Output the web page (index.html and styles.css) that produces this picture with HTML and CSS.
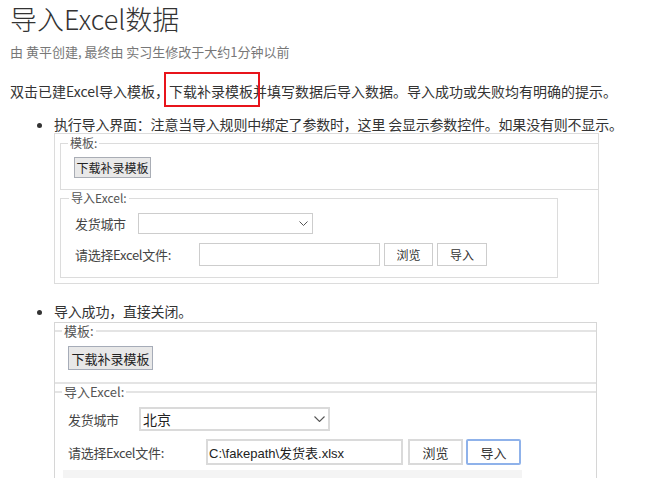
FILE: index.html
```html
<!DOCTYPE html>
<html lang="zh-CN">
<head>
<meta charset="utf-8">
<title>导入Excel数据</title>
<link rel="stylesheet" href="styles.css">
</head>
<body>
<h1 class="title">导入Excel数据</h1>
<div class="meta">由 黄平创建, 最终由 实习生修改于大约1分钟以前</div>
<p class="intro">双击已建Excel导入模板，<span class="mark">下载补录模板</span>并填写数据后导入数据。导入成功或失败均有明确的提示。</p>
<ul class="steps">
  <li class="step">
    <div class="step-text">执行导入界面：注意当导入规则中绑定了参数时，这里 会显示参数控件。如果没有则不显示。</div>
    <div class="shot shot-a">
      <fieldset class="group group-tpl">
        <legend>模板:</legend>
        <button class="btn-tpl" type="button">下载补录模板</button>
      </fieldset>
      <fieldset class="group group-imp">
        <legend>导入Excel:</legend>
        <div class="row row-1">
          <span class="lbl lbl-city">发货城市</span>
          <div class="sel"><span class="sel-val"></span><svg class="chev" width="9" height="5" viewBox="0 0 9 5"><path d="M0.5 0.5 L4.5 4.5 L8.5 0.5" fill="none" stroke="#555" stroke-width="1"/></svg></div>
        </div>
        <div class="row row-2">
          <span class="lbl lbl-file">请选择Excel文件:</span>
          <div class="file"></div>
          <button class="btn btn-browse" type="button">浏览</button>
          <button class="btn btn-import" type="button">导入</button>
        </div>
      </fieldset>
    </div>
  </li>
  <li class="step">
    <div class="step-text">导入成功，直接关闭。</div>
    <div class="shot shot-b">
      <fieldset class="group group-tpl">
        <legend>模板:</legend>
        <button class="btn-tpl" type="button">下载补录模板</button>
      </fieldset>
      <fieldset class="group group-imp">
        <legend>导入Excel:</legend>
        <div class="row row-1">
          <span class="lbl lbl-city">发货城市</span>
          <div class="sel"><span class="sel-val">北京</span><svg class="chev" width="11" height="6" viewBox="0 0 11 6"><path d="M0.5 0.5 L5.5 5.5 L10.5 0.5" fill="none" stroke="#555" stroke-width="1.1"/></svg></div>
        </div>
        <div class="row row-2">
          <span class="lbl lbl-file">请选择Excel文件:</span>
          <div class="file"><span class="file-val">C:\fakepath\发货表.xlsx</span></div>
          <button class="btn btn-browse" type="button">浏览</button>
          <button class="btn btn-import" type="button">导入</button>
        </div>
        <div class="status"></div>
      </fieldset>
    </div>
  </li>
</ul>
</body>
</html>
```
FILE: styles.css
```css
html, body {
  background: #fff;
}

body {
  margin: 0;
  padding: 0 10px;
  font-family: "Noto Sans CJK SC", "Microsoft YaHei", sans-serif;
  color: #333;
}

.title {
  margin: 2px 0 0;
  font-size: 27px;
  font-weight: 300;
  line-height: 34px;
  color: #333;
}

.meta {
  margin-top: 7px;
  font-size: 13px;
  line-height: 18px;
  color: #777;
}

.intro {
  margin: 20px 0 0;
  font-size: 14px;
  line-height: 20px;
  color: #333;
}

.mark {
  position: relative;
}

.mark::after {
  content: "";
  position: absolute;
  left: -5px;
  right: -7px;
  top: -9px;
  bottom: -6px;
  border: 2px solid #e8141b;
}

.steps {
  margin: 14px 0 0;
  padding-left: 44px;
  font-size: 14px;
  line-height: 18px;
  list-style: disc;
}

.step + .step {
  margin-top: 18px;
}

.step-text {
  line-height: 18px;
  letter-spacing: -0.2px;
}

/* ---------- screenshots ---------- */

.shot {
  box-sizing: border-box;
  line-height: normal;
}

.group {
  margin: 0;
  min-width: 0;
  box-sizing: border-box;
}

.group legend {
  padding: 0 2px;
  margin-left: -6px;
}

.row {
  display: flex;
  align-items: center;
}

.lbl {
  flex: none;
  color: #444;
}

.sel {
  display: flex;
  align-items: center;
  justify-content: space-between;
  box-sizing: border-box;
  background: #fff;
}

.file {
  display: flex;
  align-items: center;
  box-sizing: border-box;
  background: #fff;
}

.btn,
.btn-tpl {
  margin: 0;
  padding: 0;
  font-family: "Noto Sans CJK SC", "Microsoft YaHei", sans-serif;
  color: #333;
  box-sizing: border-box;
}

.btn {
  background: #fff;
}

.btn-tpl {
  color: #222;
}

/* screenshot A (small) */

.shot-a {
  width: 545px;
  border: 1px solid #dcdcdc;
  padding: 2px 0 5px 5px;
}

.shot-a .group {
  border: 1px solid #dcdcdc;
}

.shot-a .group legend {
  font-size: 12px;
  line-height: 14px;
  color: #555;
}

.shot-a .group-tpl {
  border-right: none;
  padding: 7px 0 11px 13px;
}

.shot-a .group-imp {
  width: 498px;
  margin-top: 1px;
  padding: 8px 0 11px 14px;
}

.shot-a .lbl {
  font-size: 13px;
  letter-spacing: -0.3px;
}

.shot-a .row-1 {
  height: 21px;
}

.shot-a .row-2 {
  height: 23px;
  margin-top: 9px;
}

.shot-a .lbl-city {
  width: 63px;
}

.shot-a .lbl-file {
  width: 124px;
}

.shot-a .sel {
  width: 175px;
  height: 21px;
  border: 1px solid #cdcdcd;
  padding: 0 4px 0 3px;
}

.shot-a .file {
  width: 181px;
  height: 23px;
  border: 1px solid #cdcdcd;
}

.shot-a .btn {
  height: 23px;
  border: 1px solid #cdcdcd;
  font-size: 12px;
}

.shot-a .btn-browse {
  width: 49px;
  margin-left: 4px;
}

.shot-a .btn-import {
  width: 50px;
  margin-left: 4px;
}

.shot-a .btn-tpl {
  width: 77px;
  height: 21px;
  font-size: 12px;
  background: #e9e9e9;
  border: 1px solid #a9adb5;
}

/* screenshot B (larger) */

.shot-b {
  width: 543px;
  margin-top: 2px;
  border: 1px solid #d6d6d6;
  border-bottom: none;
  padding: 0;
}

.shot-b .group {
  border: 2px solid #e4e4e4;
  border-left: none;
  border-right: none;
}

.shot-b .group legend {
  font-size: 13px;
  line-height: 15px;
  color: #555;
}

.shot-b .group-tpl {
  padding: 8px 0 12px 13px;
}

.shot-b .group-imp {
  border-bottom: none;
  padding: 8px 0 0 13px;
}

.shot-b .lbl {
  font-size: 13px;
  letter-spacing: -0.3px;
}

.shot-b .row-1 {
  height: 24px;
}

.shot-b .row-2 {
  height: 26px;
  margin-top: 8px;
}

.shot-b .lbl-city {
  width: 71px;
}

.shot-b .lbl-file {
  width: 138px;
}

.shot-b .sel {
  width: 191px;
  height: 24px;
  border: 2px solid #dadada;
  padding: 0 3px 0 2px;
}

.shot-b .sel-val {
  font-size: 14px;
  color: #222;
}

.shot-b .file {
  width: 197px;
  height: 26px;
  border: 2px solid #dadada;
  padding-left: 1px;
}

.shot-b .file-val {
  font-family: "Liberation Sans", "Noto Sans CJK SC", sans-serif;
  font-size: 13px;
  color: #222;
}

.shot-b .btn {
  width: 55px;
  height: 26px;
  border: 2px solid #dadada;
  font-size: 13px;
}

.shot-b .btn-browse {
  margin-left: 5px;
}

.shot-b .btn-import {
  margin-left: 3px;
  border-color: #8fb2ea;
  border-radius: 2px;
}

.shot-b .btn-tpl {
  width: 85px;
  height: 24px;
  font-size: 13px;
  background: #e8e8e8;
  border: 1px solid #a6acb8;
}

.shot-b .status {
  height: 24px;
  width: 459px;
  margin: 5px 0 0 -5px;
  background: #f4f4f4;
}
```
